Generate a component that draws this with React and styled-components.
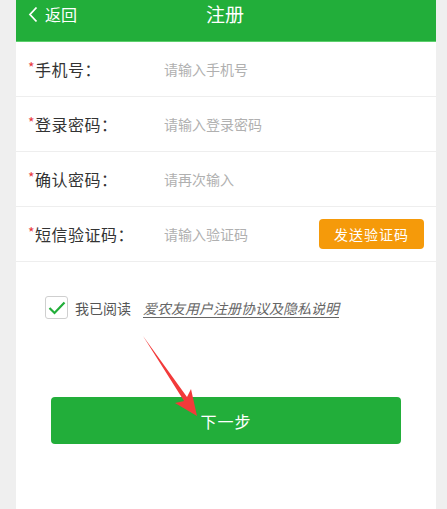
import React from "react";
import styled, { createGlobalStyle } from "styled-components";

const GlobalStyle = createGlobalStyle`
  html, body {
    margin: 0;
    padding: 0;
    background: #efefef;
    font-family: "Noto Sans CJK SC", "Noto Sans", sans-serif;
  }
`;

const fields = [
  { label: "手机号：", placeholder: "请输入手机号" },
  { label: "登录密码：", placeholder: "请输入登录密码" },
  { label: "确认密码：", placeholder: "请再次输入" },
  { label: "短信验证码：", placeholder: "请输入验证码", code: true },
];

const App = () => {
  return (
    <Page>
      <GlobalStyle />
      <Panel>
        <Header>
          <Back>
            <svg width="10" height="17" viewBox="0 0 10 17">
              <path d="M8.5 1.5 L2 8.5 L8.5 15.5" fill="none" stroke="#fff" strokeWidth="1.8" />
            </svg>
            <span>返回</span>
          </Back>
          <Title>注册</Title>
        </Header>

        {fields.map((f) => (
          <Row key={f.label}>
            <Label>
              <Star>*</Star>
              {f.label}
            </Label>
            <Input placeholder={f.placeholder} />
            {f.code && <CodeButton>发送验证码</CodeButton>}
          </Row>
        ))}

        <Agree>
          <CheckBox>
            <svg width="18" height="14" viewBox="0 0 18 14">
              <path d="M1.5 7 L6.5 12 L16.5 1.5" fill="none" stroke="#22ae3a" strokeWidth="2.2" />
            </svg>
          </CheckBox>
          <AgreeText>我已阅读</AgreeText>
          <Link>爱农友用户注册协议及隐私说明</Link>
        </Agree>

        <ButtonArea>
          <NextButton>下一步</NextButton>
          <Arrow width="70" height="90" viewBox="0 0 70 90">
            <path d="M2 2 L46 63 L50 55 L56 82 L34 69 L43 67 Z" fill="#f23a3a" />
          </Arrow>
        </ButtonArea>
      </Panel>
    </Page>
  );
};

const Page = styled.div`
  width: 447px;
  height: 509px;
  overflow: hidden;
  padding-left: 16px;
  box-sizing: border-box;
`;

const Panel = styled.div`
  width: 420px;
  background: #fff;
  min-height: 509px;
`;

const Header = styled.div`
  height: 42px;
  background: #22ae3a;
  position: relative;
  display: flex;
  align-items: center;
  justify-content: center;
  border-bottom: 1px solid #5ccf6c;
  box-sizing: border-box;
`;

const Back = styled.div`
  position: absolute;
  left: 12px;
  top: 4px;
  display: flex;
  align-items: center;
  gap: 7px;
  color: #fff;
  font-size: 16px;
  line-height: 20px;
`;

const Title = styled.div`
  color: #fff;
  font-size: 19px;
  line-height: 24px;
  margin-top: -13px;
  margin-left: -2px;
`;

const Row = styled.div`
  height: 54px;
  display: flex;
  align-items: center;
  padding: 0 12px;
  border-bottom: 1.5px solid #eeeeee;
`;

const Label = styled.div`
  width: 136px;
  font-size: 16px;
  color: #333;
  letter-spacing: 0.5px;
  flex-shrink: 0;
`;

const Star = styled.span`
  color: #e8383d;
  font-size: 14px;
  vertical-align: 3px;
`;

const Input = styled.input`
  flex: 1;
  min-width: 0;
  border: none;
  outline: none;
  font-family: inherit;
  font-size: 14px;
  color: #333;
  padding: 0;
  &::placeholder {
    color: #b0b0b0;
  }
`;

const CodeButton = styled.button`
  width: 105px;
  height: 30px;
  border: none;
  border-radius: 4px;
  background: #f59a0a;
  color: #fff;
  font-family: inherit;
  font-size: 14px;
  letter-spacing: 1px;
  flex-shrink: 0;
`;

const Agree = styled.div`
  display: flex;
  align-items: center;
  padding: 34px 0 0 29px;
`;

const CheckBox = styled.div`
  width: 21px;
  height: 21px;
  border: 1px solid #cfcfcf;
  border-radius: 3px;
  display: flex;
  align-items: center;
  justify-content: center;
  margin-right: 7px;
`;

const AgreeText = styled.span`
  font-size: 14px;
  color: #555;
  margin-right: 12px;
`;

const Link = styled.span`
  font-size: 14px;
  color: #666;
  font-style: italic;
  text-decoration: underline;
  text-underline-offset: 3px;
`;

const ButtonArea = styled.div`
  position: relative;
  padding: 78px 35px 0 35px;
`;

const NextButton = styled.button`
  width: 350px;
  height: 47px;
  border: none;
  border-radius: 4px;
  background: #22ae3a;
  color: #fff;
  font-family: inherit;
  font-size: 16px;
  letter-spacing: 1px;
  display: block;
`;

const Arrow = styled.svg`
  position: absolute;
  left: 125px;
  top: 15px;
`;

export default App;
